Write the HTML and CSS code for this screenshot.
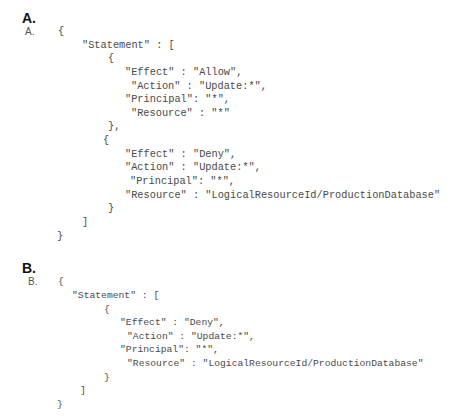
FILE: index.html
```html
<!DOCTYPE html>
<html>
<head>
<meta charset="utf-8">
<link rel="stylesheet" href="styles.css">
</head>
<body>
<section class="opt opt-a">
  <div class="head">A.</div>
  <div class="code">
    <div class="line first"><span class="lbl la">A.</span><span class="x58">{</span></div>
    <div class="line x82">"Statement" : [</div>
    <div class="line x108">{</div>
    <div class="line x125">"Effect" : "Allow",</div>
    <div class="line x131">"Action" : "Update:*",</div>
    <div class="line x125">"Principal": "*",</div>
    <div class="line x131">"Resource" : "*"</div>
    <div class="line x108">},</div>
    <div class="line x103">{</div>
    <div class="line x125">"Effect" : "Deny",</div>
    <div class="line x125">"Action" : "Update:*",</div>
    <div class="line x130">"Principal": "*",</div>
    <div class="line x125">"Resource" : "LogicalResourceId/ProductionDatabase"</div>
    <div class="line x108">}</div>
    <div class="line x82">]</div>
    <div class="line x57">}</div>
  </div>
</section>
<section class="opt opt-b">
  <div class="head">B.</div>
  <div class="code">
    <div class="line first"><span class="lbl lb">B.</span><span class="x58">{</span></div>
    <div class="line x72">"Statement" : [</div>
    <div class="line x104">{</div>
    <div class="line x120">"Effect" : "Deny",</div>
    <div class="line x127">"Action" : "Update:*",</div>
    <div class="line x120">"Principal": "*",</div>
    <div class="line x127">"Resource" : "LogicalResourceId/ProductionDatabase"</div>
    <div class="line x104">}</div>
    <div class="line x80">]</div>
    <div class="line x57">}</div>
  </div>
</section>
</body>
</html>
```

FILE: styles.css
```css
html, body {
  margin: 0;
  padding: 0;
  background: #fff;
}
body {
  width: 457px;
  height: 416px;
  overflow: hidden;
  font-family: "Liberation Sans", Arial, sans-serif;
}
.opt-a { padding-top: 11px; }
.opt-b { padding-top: 18px; }
.head {
  margin-left: 22px;
  font-weight: bold;
  font-size: 14px;
  line-height: 14px;
  color: #111;
}
.code {
  font-family: "Liberation Mono", "Courier New", monospace;
  color: #4a4a4a;
  line-height: 13.65px;
}
.opt-a .code { font-size: 10.3px; }
.opt-b .code { font-size: 9.7px; }
.line {
  display: block;
  height: 13.65px;
  white-space: pre;
}
.first { display: flex; }
.lbl {
  font-family: "Liberation Sans", Arial, sans-serif;
  font-size: 10px;
  color: #555;
}
.la { margin-left: 25px; width: 33px; }
.lb { margin-left: 28px; width: 30px; }
.x57 { padding-left: 57px; }
.x58 { padding-left: 0; }
.x72 { padding-left: 72px; }
.x80 { padding-left: 80px; }
.x82 { padding-left: 82px; }
.x103 { padding-left: 103px; }
.x104 { padding-left: 104px; }
.x108 { padding-left: 108px; }
.x120 { padding-left: 120px; }
.x125 { padding-left: 125px; }
.x127 { padding-left: 127px; }
.x130 { padding-left: 130px; }
.x131 { padding-left: 131px; }
```
